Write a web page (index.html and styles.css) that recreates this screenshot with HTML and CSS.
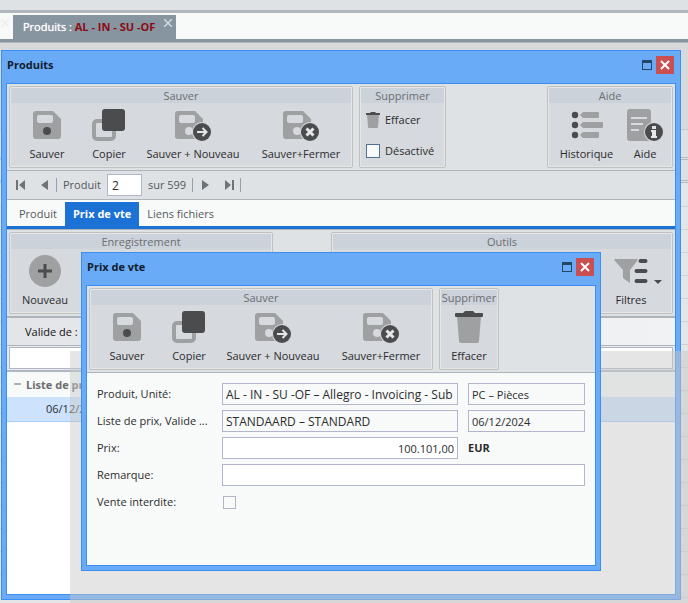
FILE: index.html
```html
<!DOCTYPE html>
<html lang="fr">
<head>
<meta charset="utf-8">
<meta name="viewport" content="width=device-width, initial-scale=1">
<title>Produits</title>
<link rel="stylesheet" href="styles.css">
</head>
<body>
<svg class="defs" aria-hidden="true">
  <defs>
    <symbol id="i-disk" viewBox="0 0 28 28">
      <path fill="#9fa0a1" fill-rule="evenodd" d="M3 0H20L28 8V25a3 3 0 0 1-3 3H3a3 3 0 0 1-3-3V3a3 3 0 0 1 3-3zM6 4a2 2 0 0 0-2 2v4a2 2 0 0 0 2 2H18a2 2 0 0 0 2-2V6a2 2 0 0 0-2-2z"/>
    </symbol>
    <symbol id="i-save" viewBox="0 0 36 32">
      <use href="#i-disk" x="4" y="2" width="28" height="28"/>
      <circle cx="18" cy="22" r="4" fill="#4b4c4d"/>
    </symbol>
    <symbol id="i-copy" viewBox="0 0 36 32">
      <rect x="3" y="12" width="20" height="18" rx="3" fill="none" stroke="#9fa0a1" stroke-width="4"/>
      <rect x="11" y="0" width="23" height="22" rx="3" fill="#4b4c4d"/>
    </symbol>
    <symbol id="i-save-new" viewBox="0 0 36 32">
      <use href="#i-disk" x="0" y="2" width="28" height="28"/>
      <circle cx="14" cy="22" r="4" fill="#d6d9dd"/>
      <circle cx="27" cy="23" r="10" fill="#d6d9dd"/>
      <circle cx="27" cy="23" r="9" fill="#4b4c4d"/>
      <path d="M22 23h9M27.500 19l4 4-4 4" fill="none" stroke="#e4e6e8" stroke-width="2"/>
    </symbol>
    <symbol id="i-save-close" viewBox="0 0 36 32">
      <use href="#i-disk" x="0" y="2" width="28" height="28"/>
      <circle cx="14" cy="22" r="4" fill="#d6d9dd"/>
      <circle cx="27" cy="23" r="10" fill="#d6d9dd"/>
      <circle cx="27" cy="23" r="9" fill="#4b4c4d"/>
      <path d="M23.500 19.500l7 7M30.500 19.500l-7 7" fill="none" stroke="#e4e6e8" stroke-width="3"/>
    </symbol>
    <symbol id="i-trash" viewBox="0 0 28 32">
      <path fill="#9fa0a1" d="M2 5H26L24 30a2 2 0 0 1-2 2H6a2 2 0 0 1-2-2z"/>
      <path fill="#4b4c4d" d="M1 2H8L10 0H18L20 2H27a1 1 0 0 1 1 1V5a1 1 0 0 1-1 1H1A1 1 0 0 1 0 5V3A1 1 0 0 1 1 2z"/>
    </symbol>
    <symbol id="i-history" viewBox="0 0 32 32">
      <g fill="#4b4c4d"><circle cx="4" cy="6" r="3.200"/><circle cx="4" cy="16" r="3.200"/><circle cx="4" cy="26" r="3.200"/></g>
      <path fill="#9fa0a1" d="M9 6l3-3H27a1 1 0 0 1 1 1V8a1 1 0 0 1-1 1H12zM9 16l3-3H31a1 1 0 0 1 1 1v4a1 1 0 0 1-1 1H12zM9 26l3-3H27a1 1 0 0 1 1 1v4a1 1 0 0 1-1 1H12z"/>
    </symbol>
    <symbol id="i-help" viewBox="0 0 36 32">
      <rect x="0" y="0" width="24" height="32" rx="3" fill="#9fa0a1"/>
      <path d="M4 9H20M4 15H16M4 21H12" stroke="#d6d9dd" stroke-width="2"/>
      <circle cx="27" cy="23" r="10" fill="#d6d9dd"/>
      <circle cx="27" cy="23" r="9" fill="#4b4c4d"/>
      <path d="M25 17h4v3h-4zM24 21h5v6h1v2h-6v-2h1v-4h-1z" fill="#e4e6e8"/>
    </symbol>
    <symbol id="i-new" viewBox="0 0 32 32">
      <circle cx="16" cy="16" r="16" fill="#9fa0a1"/>
      <path d="M9 16H23M16 9V23" stroke="#4b4c4d" stroke-width="3"/>
    </symbol>
    <symbol id="i-filter" viewBox="0 0 32 32">
      <path fill="#9fa0a1" d="M1 4H21a1 1 0 0 1 1 2L15 15V28L8 23V15L0 6a1 1 0 0 1 1-2z"/>
      <path d="M25.500 6h5M21.500 16h9M21.500 26h9" stroke="#4b4c4d" stroke-width="4" stroke-linecap="round"/>
    </symbol>
    <symbol id="i-prev" viewBox="0 0 10 10"><path d="M8 0V10L1 5z" fill="#6e7378"/></symbol>
    <symbol id="i-next" viewBox="0 0 10 10"><path d="M2 0V10L9 5z" fill="#6e7378"/></symbol>
    <symbol id="i-first" viewBox="0 0 10 10"><path d="M0 0H2V10H0zM9 0V10L3 5z" fill="#6e7378"/></symbol>
    <symbol id="i-last" viewBox="0 0 10 10"><path d="M8 0h2V10H8zM1 0V10L7 5z" fill="#6e7378"/></symbol>
    <symbol id="i-max" viewBox="0 0 10 10"><path d="M0 0H10V10H0zM1 3V9H9V3z" fill="#234567" fill-rule="evenodd"/></symbol>
    <symbol id="i-close" viewBox="0 0 10 10"><path d="M1 1l8 8M9 1l-8 8" stroke="#fff" stroke-width="2"/></symbol>
    <symbol id="i-tabclose" viewBox="0 0 8 8"><path d="M0 0l8 8M8 0l-8 8" stroke="currentColor" stroke-width="1.500"/></symbol>
  </defs>
</svg>

<header class="topbar">
  <nav class="doc-tabs">
    <button class="ghost-close" aria-label="Fermer"><svg><use href="#i-tabclose"/></svg></button>
    <div class="doc-tab">
      <a href="#produits">Produits : <span class="doc-code">AL - IN - SU -OF</span></a>
      <button class="tab-close" aria-label="Fermer"><svg><use href="#i-tabclose"/></svg></button>
    </div>
  </nav>
</header>

<main class="desktop">
  <section class="window main-window" id="produits" aria-label="Produits">
    <header class="titlebar">
      <h1>Produits</h1>
      <button class="win-max" aria-label="Agrandir"><svg><use href="#i-max"/></svg></button>
      <button class="win-close" aria-label="Fermer"><svg><use href="#i-close"/></svg></button>
    </header>
    <div class="window-body">
      <div class="ribbon">
        <section class="group">
          <h2>Sauver</h2>
          <div class="tools save-tools">
            <button class="tool"><svg><use href="#i-save"/></svg>Sauver</button>
            <button class="tool"><svg><use href="#i-copy"/></svg>Copier</button>
            <button class="tool"><svg><use href="#i-save-new"/></svg>Sauver + Nouveau</button>
            <button class="tool"><svg><use href="#i-save-close"/></svg>Sauver+Fermer</button>
          </div>
        </section>
        <section class="group delete-group">
          <h2>Supprimer</h2>
          <div class="stack">
            <button class="line-tool"><svg><use href="#i-trash"/></svg>Effacer</button>
            <label class="line-tool"><input type="checkbox" class="check">Désactivé</label>
          </div>
        </section>
        <section class="group push">
          <h2>Aide</h2>
          <div class="tools help-tools">
            <button class="tool"><svg><use href="#i-history"/></svg>Historique</button>
            <button class="tool"><svg><use href="#i-help"/></svg>Aide</button>
          </div>
        </section>
      </div>

      <div class="pager">
        <button aria-label="Premier"><svg><use href="#i-first"/></svg></button>
        <button aria-label="Précédent"><svg><use href="#i-prev"/></svg></button>
        <i class="sep"></i>
        <label for="rec">Produit</label>
        <input id="rec" type="text" value="2">
        <span>sur 599</span>
        <i class="sep"></i>
        <button aria-label="Suivant"><svg><use href="#i-next"/></svg></button>
        <button aria-label="Dernier"><svg><use href="#i-last"/></svg></button>
        <i class="sep"></i>
      </div>

      <nav class="tabs">
        <a href="#produit">Produit</a>
        <a href="#prix" class="active">Prix de vte</a>
        <a href="#liens">Liens fichiers</a>
      </nav>

      <div class="ribbon">
        <section class="group record-group">
          <h2>Enregistrement</h2>
          <div class="tools record-tools">
            <button class="tool"><svg><use href="#i-new"/></svg>Nouveau</button>
          </div>
        </section>
        <section class="group outils-group push">
          <h2>Outils</h2>
          <div class="tools filter-tools">
            <button class="tool"><svg><use href="#i-filter"/></svg>Filtres</button>
            <i class="caret"></i>
          </div>
        </section>
      </div>

      <div class="filter-bar"><span>Valide de :</span><i class="dash"></i></div>
      <div class="search-row"><input type="text" aria-label="Recherche"></div>
      <table class="records">
        <tbody>
          <tr class="group-row"><th scope="rowgroup"><i class="dash"></i>Liste de prix</th></tr>
          <tr class="data-row"><td>06/12/2024</td></tr>
        </tbody>
      </table>
    </div>
  </section>

  <div class="veil"></div>

  <section class="window dialog" role="dialog" aria-label="Prix de vte">
    <header class="titlebar">
      <h1>Prix de vte</h1>
      <button class="win-max" aria-label="Agrandir"><svg><use href="#i-max"/></svg></button>
      <button class="win-close" aria-label="Fermer"><svg><use href="#i-close"/></svg></button>
    </header>
    <div class="window-body">
      <div class="ribbon">
        <section class="group">
          <h2>Sauver</h2>
          <div class="tools save-tools">
            <button class="tool"><svg><use href="#i-save"/></svg>Sauver</button>
            <button class="tool"><svg><use href="#i-copy"/></svg>Copier</button>
            <button class="tool"><svg><use href="#i-save-new"/></svg>Sauver + Nouveau</button>
            <button class="tool"><svg><use href="#i-save-close"/></svg>Sauver+Fermer</button>
          </div>
        </section>
        <section class="group erase-group">
          <h2>Supprimer</h2>
          <div class="tools erase-tools">
            <button class="tool"><svg><use href="#i-trash"/></svg>Effacer</button>
          </div>
        </section>
      </div>
      <form class="form">
        <label for="f-prod">Produit, Unité:</label>
        <input id="f-prod" class="name" type="text" readonly value="AL - IN - SU -OF – Allegro - Invoicing - Sub">
        <input type="text" readonly value="PC – Pièces" aria-label="Unité">
        <label for="f-list">Liste de prix, Valide ...</label>
        <input id="f-list" class="name" type="text" readonly value="STANDAARD – STANDARD">
        <input type="text" readonly value="06/12/2024" aria-label="Valide de">
        <label for="f-price">Prix:</label>
        <input id="f-price" class="amount" type="text" value="100.101,00">
        <strong>EUR</strong>
        <label for="f-note">Remarque:</label>
        <input id="f-note" class="wide" type="text">
        <label for="f-stop">Vente interdite:</label>
        <input id="f-stop" type="checkbox" class="check pale">
      </form>
    </div>
  </section>
</main>
</body>
</html>
```
FILE: styles.css
```css
* { box-sizing: border-box; }

body {
  margin: 0;
  min-height: 100vh;
  display: flex;
  flex-direction: column;
  position: relative;
  overflow: hidden;
  background: #d8d9db;
  color: #2b2c2e;
  font: 12px/16px "Open Sans", "Noto Sans", sans-serif;
}

h1, h2 { margin: 0; font-size: 12px; }
button, input { font: inherit; color: inherit; }
button { border: 0; padding: 0; background: none; display: flex; align-items: center; justify-content: center; }
a { color: inherit; text-decoration: none; }
svg { display: block; }
.defs { position: absolute; width: 0; height: 0; }

/* Document tabs */
.topbar {
  padding-top: 10px;
  background: #dfe2e5;
}
.doc-tabs {
  display: flex;
  align-items: flex-end;
  height: 33px;
  border-top: 3px solid #b0b8be;
  border-bottom: 1px solid #b0b8be;
  background: linear-gradient(to top, #8795a1 3px, #f8faf9 3px);
}
.ghost-close { width: 13px; height: 27px; padding: 4px 3px 0 0; align-items: flex-start; color: #eceeee; }
.doc-tab {
  display: flex;
  align-items: flex-start;
  gap: 9px;
  height: 27px;
  padding: 4px 4px 0 10px;
  background: #8795a1;
  color: #fff;
  font-size: 11px;
}
.doc-tab a { text-shadow: 0 0 1px #fff; }
.doc-code { color: #8b0a14; font-weight: 700; text-shadow: none; }
.tab-close { color: #d5dadf; }
.doc-tabs svg { width: 8px; height: 8px; }

/* Windows on the desktop */
.desktop {
  flex: 1;
  background:
    linear-gradient(#c6c7cb, #c6c7cb) 0 86px / 100% 1px no-repeat,
    linear-gradient(#b9bac0, #b9bac0) 0 114px / 100% 1px no-repeat,
    linear-gradient(#b9bac0, #b9bac0) 0 116px / 100% 1px no-repeat,
    linear-gradient(#b9bac0, #b9bac0) 0 137px / 100% 1px no-repeat,
    linear-gradient(#b9bac0, #b9bac0) 0 139px / 100% 1px no-repeat,
    repeating-linear-gradient(transparent 0 22px, #d0d1d1 22px 23px) 0 141px / 100% 100% no-repeat,
    linear-gradient(#e4e5e7, #e4e5e7) 0 140px / 100% 100% no-repeat,
    linear-gradient(#dfe0e2, #dfe0e2) 0 87px / 100% 53px no-repeat,
    #d8d9db;
}
.window {
  position: absolute;
  display: flex;
  flex-direction: column;
  padding: 0 4px 4px;
  border: 1px solid #3a8ff2;
  background: #6aabf7;
}
.main-window { left: 1px; right: 7px; top: 50px; bottom: 3px; }
.dialog { left: 81px; right: 87px; top: 252px; }
.veil { position: absolute; inset: 351px 0 0 70px; background: rgba(201, 201, 201, .48); }

.titlebar {
  display: flex;
  align-items: center;
  height: 32px;
  padding: 0 2px 4px 1px;
}
.titlebar h1 { flex: 1; font-size: 11px; color: #111d2e; }
.win-max { width: 18px; height: 18px; }
.win-close { width: 18px; height: 18px; background: #c94f50; }
.titlebar svg { width: 10px; height: 10px; }
.window-body {
  flex: 1;
  display: flex;
  flex-direction: column;
  border: 1px solid #3a8ff2;
  background: #fff;
}

/* Ribbon */
.ribbon {
  display: flex;
  gap: 6px;
  padding: 2px;
  border-bottom: 1px solid #adb5bb;
  background: #dfe2e5;
}
.group {
  display: flex;
  flex-direction: column;
  height: 82px;
  padding: 1px;
  border: 1px solid #bfc0bf;
  border-radius: 2px;
  background: linear-gradient(#d6d9dd, #d6d9dd) content-box, #e4e6e8;
}
.group h2 {
  height: 15px;
  line-height: 16px;
  background: #cbd2da;
  color: #6b6d70;
  font-size: 11px;
  font-weight: 400;
  text-align: center;
}
.push { margin-left: auto; }
.tools { display: grid; padding-top: 6px; }
.tool { flex-direction: column; gap: 5px; white-space: nowrap; font-size: 11px; }
.tool svg { width: 36px; height: 32px; }
.save-tools { grid-template-columns: 72px 52px 116px 100px; }
.help-tools { grid-template-columns: 75px 42px 5px; }
.record-tools { grid-template-columns: 68px; }
.filter-tools { grid-template-columns: 36px 22px; justify-content: end; align-items: center; }
.erase-tools { grid-template-columns: 56px; }
.record-group { width: 264px; }
.outils-group { width: 342px; }
.delete-group { width: 87px; }
.erase-group { width: 60px; }
.caret { margin-left: 5px; border: 4px solid transparent; border-top-color: #4b4c4d; border-bottom: 0; width: 0; }

.stack { display: flex; flex-direction: column; gap: 15px; padding: 9px 5px; }
.line-tool { display: flex; justify-content: flex-start; gap: 5px; height: 16px; align-items: center; font-size: 11px; }
.line-tool svg { width: 14px; height: 16px; }
.check { appearance: none; width: 14px; height: 14px; margin: 0; border: 1px solid #4f7194; background: #f8faf9; }

/* Record navigation */
.pager {
  display: flex;
  align-items: center;
  gap: 6px;
  height: 29px;
  padding-left: 8px;
  border-bottom: 1px solid #adb5bb;
  background: #dfe2e5;
  color: #55585c;
  font-size: 11px;
}
.pager button { width: 11px; height: 16px; }
.pager button + button { margin-left: 7px; }
.pager svg { width: 10px; height: 10px; }
.pager input { width: 35px; height: 22px; padding: 0 4px; border: 1px solid #b3b5cc; background: #fff; color: #2b2c2e; font-size: 12px; }
.sep { width: 1px; height: 14px; background: #94a0ab; }

.tabs {
  display: flex;
  height: 30px;
  padding-top: 2px;
  border-bottom: 1px solid #adb5bb;
  background: linear-gradient(to top, #1b72d4 3px, #f8faf9 3px);
  color: #55585c;
  font-size: 11px;
}
.tabs a { height: 24px; padding: 4px 8px; }
.tabs a:first-child { padding-left: 12px; }
.tabs .active { background: #1b72d4; color: #fff; font-weight: 700; }

/* Price list */
.filter-bar {
  display: flex;
  align-items: center;
  gap: 5px;
  height: 29px;
  padding-left: 18px;
  border-top: 1px solid #adb5bb;
  border-bottom: 1px solid #adb5bb;
  background: linear-gradient(to right, #e3e5e9, #f1f2f3);
  color: #111;
  font-size: 11px;
}
.dash { display: inline-block; width: 7px; height: 2px; background: #adb0b3; }
.search-row { padding: 1px 2px; border-bottom: 2px solid #adb8c4; background: #e9eaec; }
.search-row input { display: block; width: 100%; height: 22px; border: 1px solid #b3b5c3; background: #fff; }
.records { width: 100%; border-collapse: collapse; text-align: left; font-size: 11px; }
.records th, .records td { height: 24px; padding: 0; }
.records th { height: 25px; padding-left: 7px; background: #f8faf9; color: #6b6d70; }
.records th .dash { margin-right: 5px; vertical-align: 4px; }
.records td { padding-left: 39px; background: #cce2fd; border-bottom: 1px solid #a3ccf8; }

/* Dialog form */
.form {
  display: grid;
  grid-template-columns: 115px 236fr 117fr;
  gap: 5px 10px;
  align-items: center;
  padding: 10px 10px 52px;
  background: #f8faf9;
  font-size: 11px;
}
.form input[type="text"] {
  width: 100%;
  height: 22px;
  padding: 0 3px;
  border: 1px solid #b3b5cc;
  background: #fff;
}
.form input[readonly] { background: #f8faf9; }
.form .name { font-size: 12px; }
.form .amount { text-align: right; }
.form .wide { grid-column: 2 / 4; }
.form label { height: 22px; line-height: 22px; white-space: nowrap; }
.pale { width: 13px; height: 13px; margin-left: 1px; border-color: #b3b5c3; }
```
